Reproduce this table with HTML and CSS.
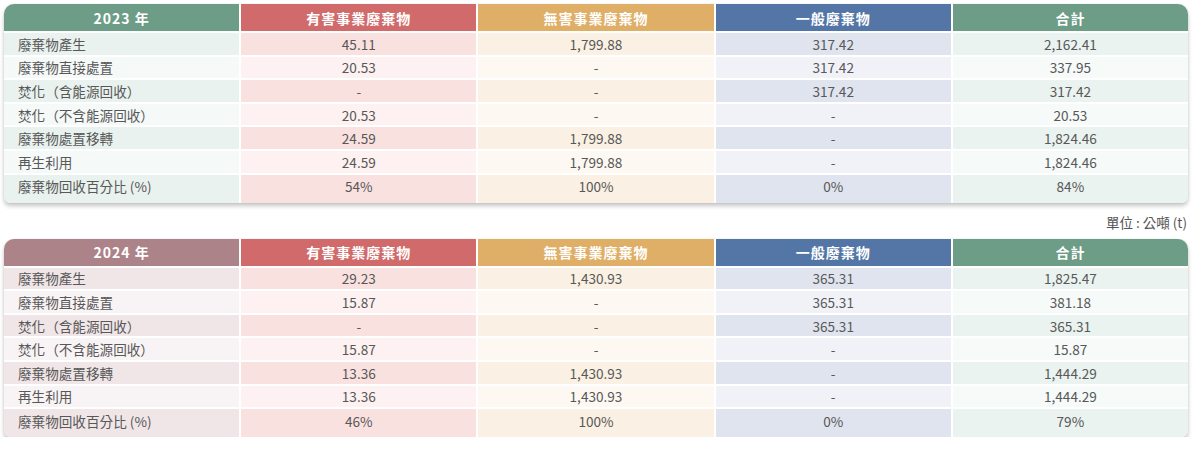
FILE: index.html
```html
<!DOCTYPE html>
<html lang="zh-Hant">
<head>
<meta charset="utf-8">
<link rel="stylesheet" href="styles.css">
</head>
<body>
<div class="page">
  <div class="tbl y2023">
    <div class="th c1">2023 年</div><div class="th c2">有害事業廢棄物</div><div class="th c3">無害事業廢棄物</div><div class="th c4">一般廢棄物</div><div class="th c5">合計</div>
    <div class="td c1 odd lab">廢棄物產生</div><div class="td c2 odd">45.11</div><div class="td c3 odd">1,799.88</div><div class="td c4 odd">317.42</div><div class="td c5 odd">2,162.41</div>
    <div class="td c1 even lab">廢棄物直接處置</div><div class="td c2 even">20.53</div><div class="td c3 even">-</div><div class="td c4 even">317.42</div><div class="td c5 even">337.95</div>
    <div class="td c1 odd lab">焚化（含能源回收）</div><div class="td c2 odd">-</div><div class="td c3 odd">-</div><div class="td c4 odd">317.42</div><div class="td c5 odd">317.42</div>
    <div class="td c1 even lab">焚化（不含能源回收）</div><div class="td c2 even">20.53</div><div class="td c3 even">-</div><div class="td c4 even">-</div><div class="td c5 even">20.53</div>
    <div class="td c1 odd lab">廢棄物處置移轉</div><div class="td c2 odd">24.59</div><div class="td c3 odd">1,799.88</div><div class="td c4 odd">-</div><div class="td c5 odd">1,824.46</div>
    <div class="td c1 even lab">再生利用</div><div class="td c2 even">24.59</div><div class="td c3 even">1,799.88</div><div class="td c4 even">-</div><div class="td c5 even">1,824.46</div>
    <div class="td c1 odd lab last">廢棄物回收百分比 (%)</div><div class="td c2 odd last">54%</div><div class="td c3 odd last">100%</div><div class="td c4 odd last">0%</div><div class="td c5 odd last">84%</div>
  </div>
  <div class="unit">單位 : 公噸 (t)</div>
  <div class="tbl y2024">
    <div class="th c1">2024 年</div><div class="th c2">有害事業廢棄物</div><div class="th c3">無害事業廢棄物</div><div class="th c4">一般廢棄物</div><div class="th c5">合計</div>
    <div class="td c1 odd lab">廢棄物產生</div><div class="td c2 odd">29.23</div><div class="td c3 odd">1,430.93</div><div class="td c4 odd">365.31</div><div class="td c5 odd">1,825.47</div>
    <div class="td c1 even lab">廢棄物直接處置</div><div class="td c2 even">15.87</div><div class="td c3 even">-</div><div class="td c4 even">365.31</div><div class="td c5 even">381.18</div>
    <div class="td c1 odd lab">焚化（含能源回收）</div><div class="td c2 odd">-</div><div class="td c3 odd">-</div><div class="td c4 odd">365.31</div><div class="td c5 odd">365.31</div>
    <div class="td c1 even lab">焚化（不含能源回收）</div><div class="td c2 even">15.87</div><div class="td c3 even">-</div><div class="td c4 even">-</div><div class="td c5 even">15.87</div>
    <div class="td c1 odd lab">廢棄物處置移轉</div><div class="td c2 odd">13.36</div><div class="td c3 odd">1,430.93</div><div class="td c4 odd">-</div><div class="td c5 odd">1,444.29</div>
    <div class="td c1 even lab">再生利用</div><div class="td c2 even">13.36</div><div class="td c3 even">1,430.93</div><div class="td c4 even">-</div><div class="td c5 even">1,444.29</div>
    <div class="td c1 odd lab last">廢棄物回收百分比 (%)</div><div class="td c2 odd last">46%</div><div class="td c3 odd last">100%</div><div class="td c4 odd last">0%</div><div class="td c5 odd last">79%</div>
  </div>
</div>
</body>
</html>
```
FILE: styles.css
```css
html, body {
  margin: 0;
  padding: 0;
  background: #ffffff;
}
body {
  font-family: "Noto Sans CJK TC", "Noto Sans", sans-serif;
  color: #555555;
}
.page {
  padding: 4px 12px 0 4px;
  width: 1184px;
}
.tbl {
  display: grid;
  grid-template-columns: repeat(5, 1fr);
  grid-template-rows: 27px repeat(6, 21.6px) 28px;
  column-gap: 2px;
  row-gap: 2px;
  background: #ffffff;
  border-radius: 10px 10px 6px 6px;
  overflow: hidden;
  box-shadow: 0 3px 4px rgba(0, 0, 0, 0.22), 0 0 1px rgba(0, 0, 0, 0.25);
}
.th {
  display: flex;
  align-items: center;
  justify-content: center;
  color: #ffffff;
  font-weight: 700;
  font-size: 14px;
  letter-spacing: 1px;
}
.td {
  display: flex;
  align-items: center;
  justify-content: center;
  font-size: 13.6px;
  color: #585858;
}
.td.last {
  padding-bottom: 5px;
}
.td.lab {
  justify-content: flex-start;
  padding-left: 14px;
}
.th.c2 { background: #d16a6a; }
.th.c3 { background: #dfae67; }
.th.c4 { background: #5376a6; }
.th.c5 { background: #6d9d87; }
.y2023 .th.c1 { background: #6d9d87; }
.y2024 .th.c1 { background: #ad838a; }

.y2023 .td.c1.odd { background: #e9f2ee; }
.y2023 .td.c1.even { background: #f5f9f8; }
.y2024 .td.c1.odd { background: #f0e6e8; }
.y2024 .td.c1.even { background: #f8f3f4; }
.td.c2.odd { background: #f9e1e0; }
.td.c2.even { background: #fdf1f1; }
.td.c3.odd { background: #faf0e3; }
.td.c3.even { background: #fdf8f2; }
.td.c4.odd { background: #e0e4ef; }
.td.c4.even { background: #f0f2f8; }
.td.c5.odd { background: #eaf3ef; }
.td.c5.even { background: #f6faf8; }

.unit {
  text-align: right;
  font-size: 13.5px;
  color: #555555;
  height: 18px;
  line-height: 18px;
  margin: 10px 1px 8px 0;
}
```
